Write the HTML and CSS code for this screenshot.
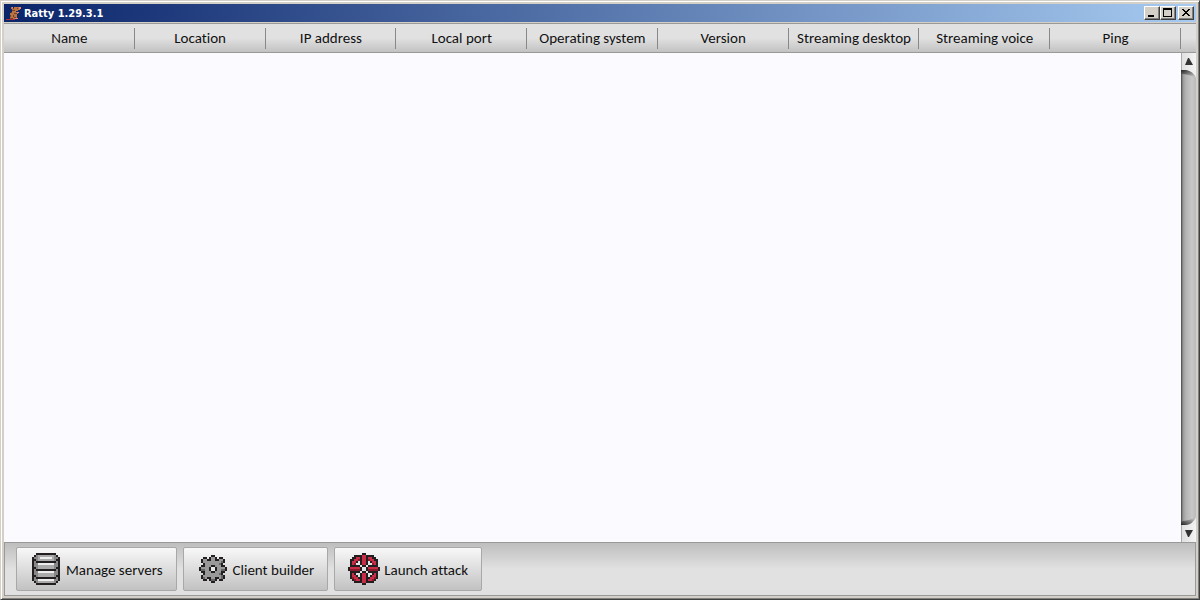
FILE: index.html
```html
<!DOCTYPE html>
<html lang="en">
<head>
<meta charset="utf-8">
<title>Ratty 1.29.3.1</title>
<link rel="stylesheet" href="styles.css">
</head>
<body>
<div class="window">
  <header class="titlebar">
    <svg class="app-icon" viewBox="0 0 16 16" shape-rendering="crispEdges" aria-hidden="true">
      <path fill="#b87440" d="M5 2h2v1h1v-1h5v1h1v2h-2v1h-2v1h1v1h1v1h-1v5H4V8h1V7h1V4H5z"/>
      <path fill="#70402c" d="M7 3h1v1H7zM11 3h1v1h-1zM6 5h3v1H6zM5 7h1v1H5zM8 8h3v1H8zM4 10h1v2H4zM7 10h1v2H7zM8 12h2v1H8zM4 13h3v1H4z"/>
      <path fill="#f08080" d="M6 2h1v1H6zM13 2h2v2h-2zM11 7h2v1h-2zM9 13h3v1H9z"/>
      <path fill="#b02c38" d="M0 14h4v1H0zM4 14h5v1H4z"/>
    </svg>
    <h1 class="title">Ratty 1.29.3.1</h1>
    <div class="controls">
      <button class="control" type="button" aria-label="Minimize"><svg viewBox="0 0 12 10" shape-rendering="crispEdges"><path d="M2 7h6v2H2z"/></svg></button>
      <button class="control" type="button" aria-label="Maximize"><svg viewBox="0 0 12 10" shape-rendering="crispEdges"><path fill-rule="evenodd" d="M1 0h9v9H1zM2 2v6h7V2z"/></svg></button>
      <button class="control close" type="button" aria-label="Close"><svg viewBox="0 0 12 10" shape-rendering="crispEdges"><path d="M2 1h2v1h1v1h2V2h1V1h2v1H9v1H8v1H7v1h1v1h1v1h1v1H8V7H7V6H5v1H4v1H2V7h1V6h1V5h1V4H4V3H3V2H2z"/></svg></button>
    </div>
  </header>
  <div class="heading">
    <table class="columns">
      <thead>
        <tr>
          <th scope="col">Name</th><th scope="col">Location</th><th scope="col">IP address</th>
          <th scope="col">Local port</th><th scope="col">Operating system</th><th scope="col">Version</th>
          <th scope="col">Streaming desktop</th><th scope="col">Streaming voice</th><th scope="col">Ping</th>
        </tr>
      </thead>
    </table>
  </div>
  <main class="content">
    <div class="clients"></div>
    <div class="scrollbar">
      <button class="scroll-button" type="button" aria-label="Scroll up"><svg viewBox="0 0 14 17"><path d="M6 5h1l4 7H3z"/></svg></button>
      <div class="track">
        <svg class="cap" viewBox="0 0 15 8">
          <defs><linearGradient id="edge" x2="1" y2="1"><stop offset="0" stop-color="#222"/><stop offset=".45" stop-color="#777"/><stop offset=".8" stop-color="#bbb"/></linearGradient></defs>
          <path class="shade" d="M0 0h5Q12 1 15 8V0z"/><path class="edge" d="M0 0h5Q12 1 15 8Q8 4 0 4z"/>
        </svg>
        <svg class="cap bottom" viewBox="0 0 15 8"><path class="shade" d="M0 0h5Q12 1 15 8V0z"/><path class="edge" d="M0 0h5Q12 1 15 8Q8 4 0 4z"/></svg>
      </div>
      <button class="scroll-button" type="button" aria-label="Scroll down"><svg viewBox="0 0 14 17"><path d="M6 12h1l4-7H3z"/></svg></button>
    </div>
  </main>
  <footer class="toolbar">
    <button class="action" type="button">
      <svg class="icon" viewBox="0 0 16 16" shape-rendering="crispEdges" aria-hidden="true">
        <path fill="#888" d="M3 1h10v14H3zM2 2h12v12H2z"/>
        <path fill="#aaa" d="M4 1h8v3H4zM4 6h8v2H4zM4 10h8v2H4zM4 14h8v1H4z"/>
        <path stroke="#eee" d="M5 2.5h6M4 5.5h8M4 9.5h8M4 13.5h8"/>
        <path stroke="#231f20" d="M3 .5h10M2 1.5h1M13 1.5h1M1 2.5h1M14 2.5h1M1 3.5h2M13 3.5h2M1 4.5h1M3 4.5h10M14 4.5h1M1 5.5h1M14 5.5h1M1 6.5h1M14 6.5h1M1 7.5h2M13 7.5h2M1 8.5h1M3 8.5h10M14 8.5h1M1 9.5h1M14 9.5h1M1 10.5h1M14 10.5h1M1 11.5h2M13 11.5h2M1 12.5h1M3 12.5h10M14 12.5h1M1 13.5h1M14 13.5h1M2 14.5h1M13 14.5h1M3 15.5h10"/>
      </svg>
      <span class="label">Manage servers</span>
    </button>
    <button class="action" type="button">
      <svg class="icon gear" viewBox="0 0 14 14" shape-rendering="crispEdges" aria-hidden="true">
        <path stroke="#999" d="M6 1.5h2M2 2.5h2M6 2.5h2M10 2.5h2M2 3.5h9M3 4.5h8M3 5.5h3M8 5.5h3M1 6.5h4M9 6.5h4M3 7.5h2M9 7.5h2M3 8.5h3M8 8.5h3M3 9.5h8M2 10.5h9M3 11.5h1M6 11.5h2M10 11.5h1"/>
        <path stroke="#666" d="M11 3.5h1M10 4.5h1M1 7.5h2M11 7.5h2M10 9.5h1M11 10.5h1M2 11.5h1M11 11.5h1M6 12.5h2"/>
        <path stroke="#e6e6e6" d="M6 6.5h2M6 7.5h2"/>
        <path stroke="#231f20" d="M6 .5h2M2 1.5h2M5 1.5h1M8 1.5h1M10 1.5h2M1 2.5h1M4 2.5h2M8 2.5h2M12 2.5h1M1 3.5h1M12 3.5h1M2 4.5h1M11 4.5h1M1 5.5h2M6 5.5h2M11 5.5h2M0 6.5h1M5 6.5h1M8 6.5h1M13 6.5h1M0 7.5h1M5 7.5h1M8 7.5h1M13 7.5h1M1 8.5h2M6 8.5h2M11 8.5h2M2 9.5h1M11 9.5h1M1 10.5h1M12 10.5h1M1 11.5h1M4 11.5h2M8 11.5h2M12 11.5h1M2 12.5h2M5 12.5h1M8 12.5h1M10 12.5h2M6 13.5h2"/>
      </svg>
      <span class="label">Client builder</span>
    </button>
    <button class="action" type="button">
      <svg class="icon" viewBox="0 0 16 16" shape-rendering="crispEdges" aria-hidden="true">
        <path fill="#231f20" d="M7 0h2v1h4v1h1v1h1v4h1v2h-1v4h-1v1h-1v1H9v1H7v-1H3v-1H2v-1H1V9H0V7h1V3h1V2h1V1h4z"/>
        <path stroke="#e4e4e4" d="M5 4.5h1M10 4.5h1M4 5.5h2M10 5.5h2M6 6.5h1M9 6.5h1M7 7.5h2M7 8.5h2M6 9.5h1M9 9.5h1M4 10.5h2M10 10.5h2M5 11.5h1M10 11.5h1"/>
        <path stroke="#c82d48" d="M7 1.5h2M4 2.5h2M7 2.5h2M10 2.5h2M3 3.5h2M7 3.5h2M11 3.5h2M2 4.5h2M7 4.5h2M12 4.5h2M2 5.5h1M7 5.5h2M13 5.5h1M1 7.5h5M10 7.5h5M2 10.5h1M7 10.5h2M13 10.5h1M2 11.5h2M7 11.5h2M12 11.5h2M3 12.5h2M7 12.5h2M11 12.5h2M4 13.5h2M7 13.5h2M10 13.5h2M7 14.5h2"/>
        <path stroke="#8c1a2a" d="M5 3.5h1M10 3.5h1M3 5.5h1M12 5.5h1M1 8.5h5M10 8.5h5M2 12.5h1M13 12.5h1M3 13.5h1M12 13.5h1"/>
      </svg>
      <span class="label">Launch attack</span>
    </button>
  </footer>
</div>
</body>
</html>
```

FILE: styles.css
```css
* { box-sizing: border-box; }

body {
  margin: 0;
  font: 15px/20px Carlito, Lato, sans-serif;
  font-variant-ligatures: none;
  color: #111;
}

button {
  margin: 0;
  padding: 0;
  font: inherit;
  font-variant-ligatures: none;
  color: inherit;
}

.window {
  display: flex;
  flex-direction: column;
  height: 100vh;
  padding: 3px;
  background: #d4d0c8;
  border: 1px solid;
  border-color: #d4d0c8 #404040 #404040 #d4d0c8;
  box-shadow: inset 1px 1px #fff, inset -1px -1px #808080;
}

.titlebar {
  display: flex;
  align-items: center;
  height: 18px;
  padding: 0 2px;
  background: linear-gradient(to right, #0a246a, #a6caf0);
}

.app-icon { width: 16px; height: 16px; }

.title {
  flex: 1;
  margin: 0 0 0 2px;
  padding-top: 2px;
  font: bold 11px/16px "DejaVu Sans Condensed", "DejaVu Sans", sans-serif;
  color: #fff;
}

.controls { display: flex; }

.control {
  width: 16px;
  height: 14px;
  padding: 1px;
  background: #d4d0c8;
  border: 1px solid;
  border-color: #fff #404040 #404040 #fff;
  box-shadow: inset -1px -1px #808080;
}

.control svg { display: block; width: 12px; height: 10px; }
.close { margin-left: 2px; }

.heading {
  height: 30px;
  margin-top: 1px;
  border: 1px solid #999;
  border-width: 1px 0;
  background: linear-gradient(#e1e1e1 50%, #c2c2c2);
}

.columns {
  width: calc(100% - 15px);
  height: 28px;
  table-layout: fixed;
  border-collapse: collapse;
}

.columns th {
  padding: 0;
  font-weight: 400;
  white-space: nowrap;
  background: linear-gradient(#888, #888) right center / 1px 21px no-repeat;
}

.content { display: flex; flex: 1; min-height: 0; }
.clients { flex: 1; background: #fafaff; }

.scrollbar { display: flex; flex-direction: column; width: 15px; }

.scroll-button {
  height: 17px;
  border: 0;
  border-left: 1px solid #aaa;
  background: linear-gradient(to right, #e0e0e0, #f4f4f4);
}

.scroll-button svg { display: block; width: 14px; height: 17px; fill: #333; }

.track {
  display: flex;
  flex: 1;
  flex-direction: column;
  justify-content: space-between;
  background: linear-gradient(to right, #444, #999 2px, #b4b4b4 5px, #c8c8c8 11px, #bbb);
}

.cap { display: block; width: 15px; height: 8px; }
.bottom { transform: scaleY(-1); }
.shade { fill: #eee; }
.edge { fill: url(#edge); }

.toolbar {
  display: flex;
  gap: 6px;
  padding: 4px 11px;
  border: 1px solid #999;
  background: linear-gradient(#bebebe, #e1e1e1 50%);
}

.action {
  display: flex;
  align-items: center;
  gap: 4px;
  height: 44px;
  padding: 0 13px;
  border: 1px solid #a8a8a8;
  border-radius: 2px;
  background: linear-gradient(#f8f8f8, #c2c2c2);
}

.icon { width: 32px; height: 32px; }
.gear { padding: 2px; }
.label { padding-top: 2px; }
```
